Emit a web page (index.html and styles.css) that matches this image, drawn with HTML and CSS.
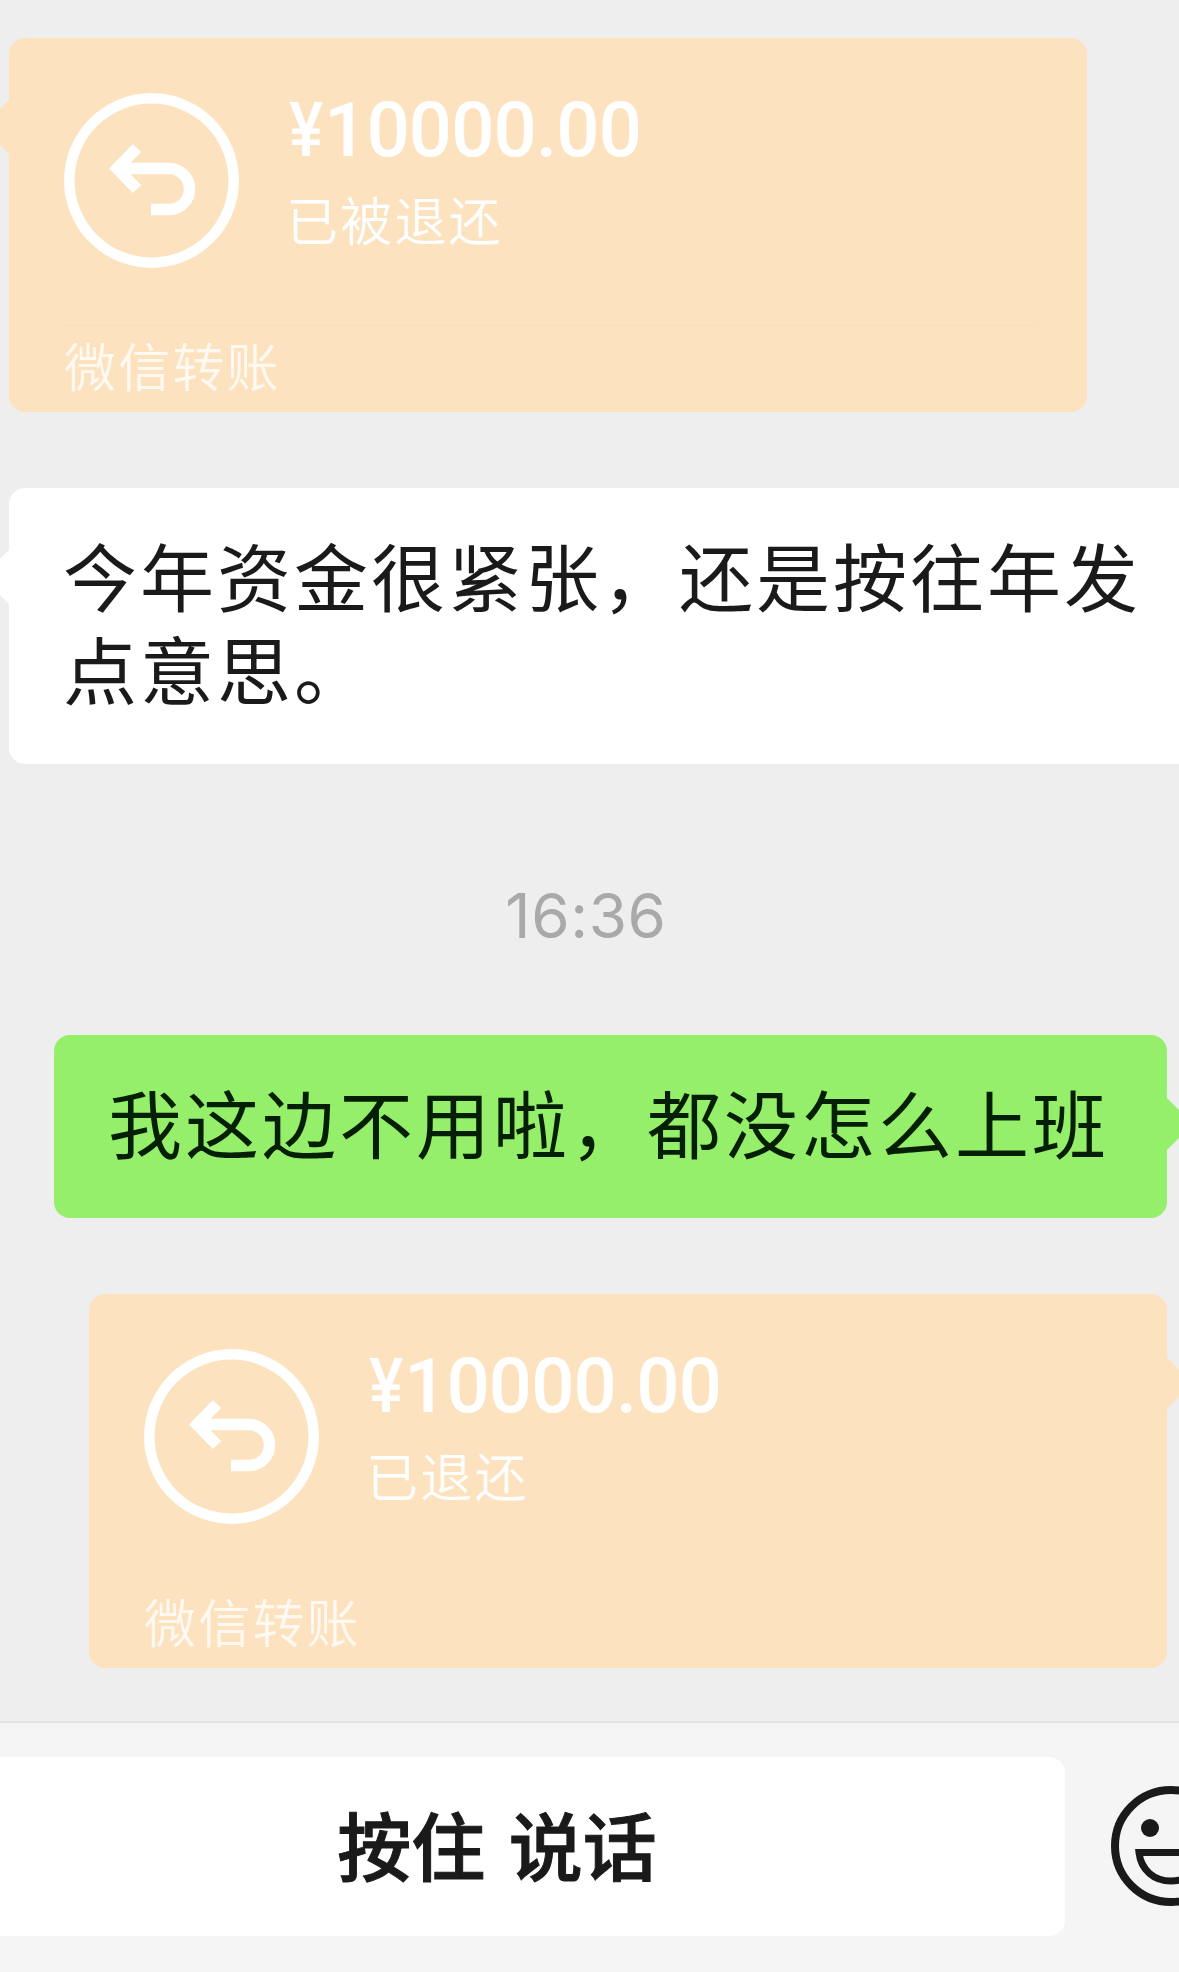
FILE: index.html
```
<!doctype html>
<html lang="zh-CN">
  <head>
    <meta charset="UTF-8" />
    <meta name="viewport" content="width=device-width, initial-scale=1.0" />
    <title>聊天</title>
    <link rel="stylesheet" href="styles.css">
  </head>
  <body>
    <svg class="symbols" aria-hidden="true">
      <symbol id="icon-return" viewBox="0 0 175 175">
        <circle cx="87.5" cy="87.5" r="82.2" stroke-width="10.5" />
        <path d="M73 55 L53 75.500 L73 96 M54 75.500 H105 A20.500 20.500 0 0 1 105 116.500 H87" stroke-width="11.5" />
      </symbol>
    </svg>
    <div class="screen">
      <main class="chat">
        <div class="row received">
          <div class="bubble transfer">
            <div class="transfer-main">
              <svg class="transfer-icon"><use href="#icon-return" /></svg>
              <div class="transfer-info">
                <div class="amount"><span class="yen">¥</span>10000.00</div>
                <div class="status">已被退还</div>
              </div>
            </div>
            <div class="transfer-footer">微信转账</div>
          </div>
        </div>

        <div class="row received">
          <div class="bubble text text-long">今年资金很紧张，还是按往年发<br />点意思。</div>
        </div>

        <time class="time">16:36</time>

        <div class="row sent">
          <div class="bubble text">我这边不用啦，都没怎么上班</div>
        </div>

        <div class="row sent">
          <div class="bubble transfer no-line">
            <div class="transfer-main">
              <svg class="transfer-icon"><use href="#icon-return" /></svg>
              <div class="transfer-info">
                <div class="amount"><span class="yen">¥</span>10000.00</div>
                <div class="status">已退还</div>
              </div>
            </div>
            <div class="transfer-footer">微信转账</div>
          </div>
        </div>
      </main>

      <footer class="toolbar">
        <button class="talk-btn" type="button">按住 说话</button>
        <svg class="emoji" viewBox="0 0 120 120">
          <circle cx="60" cy="60" r="56" stroke-width="8" />
          <circle class="eye" cx="39" cy="42" r="9" />
          <circle class="eye" cx="81" cy="42" r="9" />
          <path d="M28 66.500 H92 C90 84 77 95 60 95 S30 84 28 66.500 Z" stroke-width="7" />
        </svg>
      </footer>
    </div>
  </body>
</html>
```
FILE: styles.css
```
:root {
  --page-bg: #eeeeee;
  --bar-bg: #f5f5f5;
  --transfer-bg: #fde2bf;
  --sent-bg: #95ef6a;
  --text-color: #1a1a1a;
  --text-light: #a9a9a9;
}

* {
  margin: 0;
  padding: 0;
  box-sizing: border-box;
}

body {
  font-family: 'Noto Sans CJK SC', sans-serif;
  color: var(--text-color);
  background-color: var(--page-bg);
}

.symbols {
  display: none;
}

.screen {
  display: flex;
  flex-direction: column;
  width: 1179px;
  height: 1972px;
  overflow: hidden;
}

.chat {
  display: flex;
  flex-direction: column;
  flex: 1;
  padding-top: 38px;
}

.row {
  display: flex;
  margin-bottom: 76px;
}

.row:last-child {
  margin-bottom: 0;
}

.received {
  padding-left: 9px;
}

.sent {
  justify-content: flex-end;
  padding-right: 12px;
}

.bubble {
  position: relative;
  flex: none;
  border-radius: 16px;
  background-color: white;
}

/* arrow towards the avatar */
.bubble::before {
  content: '';
  position: absolute;
  top: 67px;
  width: 44px;
  height: 44px;
  border-radius: 6px;
  background-color: inherit;
  transform: rotate(45deg);
}

.received .bubble::before {
  left: -18px;
}

.sent .bubble::before {
  right: -17px;
}

.text {
  padding: 39px 0 51px 54px;
  font-size: 74px;
  line-height: 93px;
  letter-spacing: 3px;
  white-space: nowrap;
}

.text-long {
  width: 1240px;
}

.sent .text {
  width: 1113px;
  color: #041f04;
  background-color: var(--sent-bg);
}

.transfer {
  width: 1078px;
  height: 374px;
  padding: 55px 49px 0 55px;
  color: white;
  background-color: var(--transfer-bg);
}

.transfer-main {
  display: flex;
  gap: 50px;
  height: 231px;
}

.transfer-icon {
  width: 175px;
  height: 175px;
  fill: none;
  stroke: white;
}

.amount {
  margin-top: -1px;
  font-family: Roboto, sans-serif;
  font-size: 76px;
  font-weight: 500;
  line-height: 76px;
  letter-spacing: -0.8px;
}

.yen {
  display: inline-block;
  width: 35px;
  transform: scaleX(0.85);
  transform-origin: left;
}

.status {
  margin: 16px 0 0 -3px;
  font-size: 52px;
  font-weight: 350;
  line-height: 70px;
  letter-spacing: 2.2px;
}

.transfer-footer {
  padding-top: 4px;
  border-top: 2px solid #fadfc2;
  font-size: 52px;
  font-weight: 350;
  line-height: 70px;
  letter-spacing: 2.2px;
  color: rgba(255, 255, 255, 0.8);
}

.no-line .transfer-footer {
  border-color: transparent;
}

.time {
  margin: 37px 0 80px;
  padding-right: 7px;
  font-family: Inter, sans-serif;
  font-size: 62px;
  line-height: 78px;
  letter-spacing: 0.6px;
  text-align: center;
  color: var(--text-light);
}

.toolbar {
  display: flex;
  align-items: flex-start;
  gap: 46px;
  height: 251px;
  padding-top: 34px;
  border-top: 2px solid #e2e3e3;
  background-color: var(--bar-bg);
}

.talk-btn {
  flex: none;
  width: 1065px;
  height: 179px;
  padding: 0 71px 8px 0;
  border: none;
  border-radius: 0 16px 16px 0;
  background-color: white;
  font-family: inherit;
  font-size: 74px;
  font-weight: 500;
  word-spacing: 7px;
  color: var(--text-color);
  -webkit-text-stroke: 1px var(--text-color);
}

.emoji {
  flex: none;
  width: 120px;
  height: 120px;
  margin-top: 29px;
  fill: none;
  stroke: var(--text-color);
}

.emoji .eye {
  fill: var(--text-color);
  stroke: none;
}
```
